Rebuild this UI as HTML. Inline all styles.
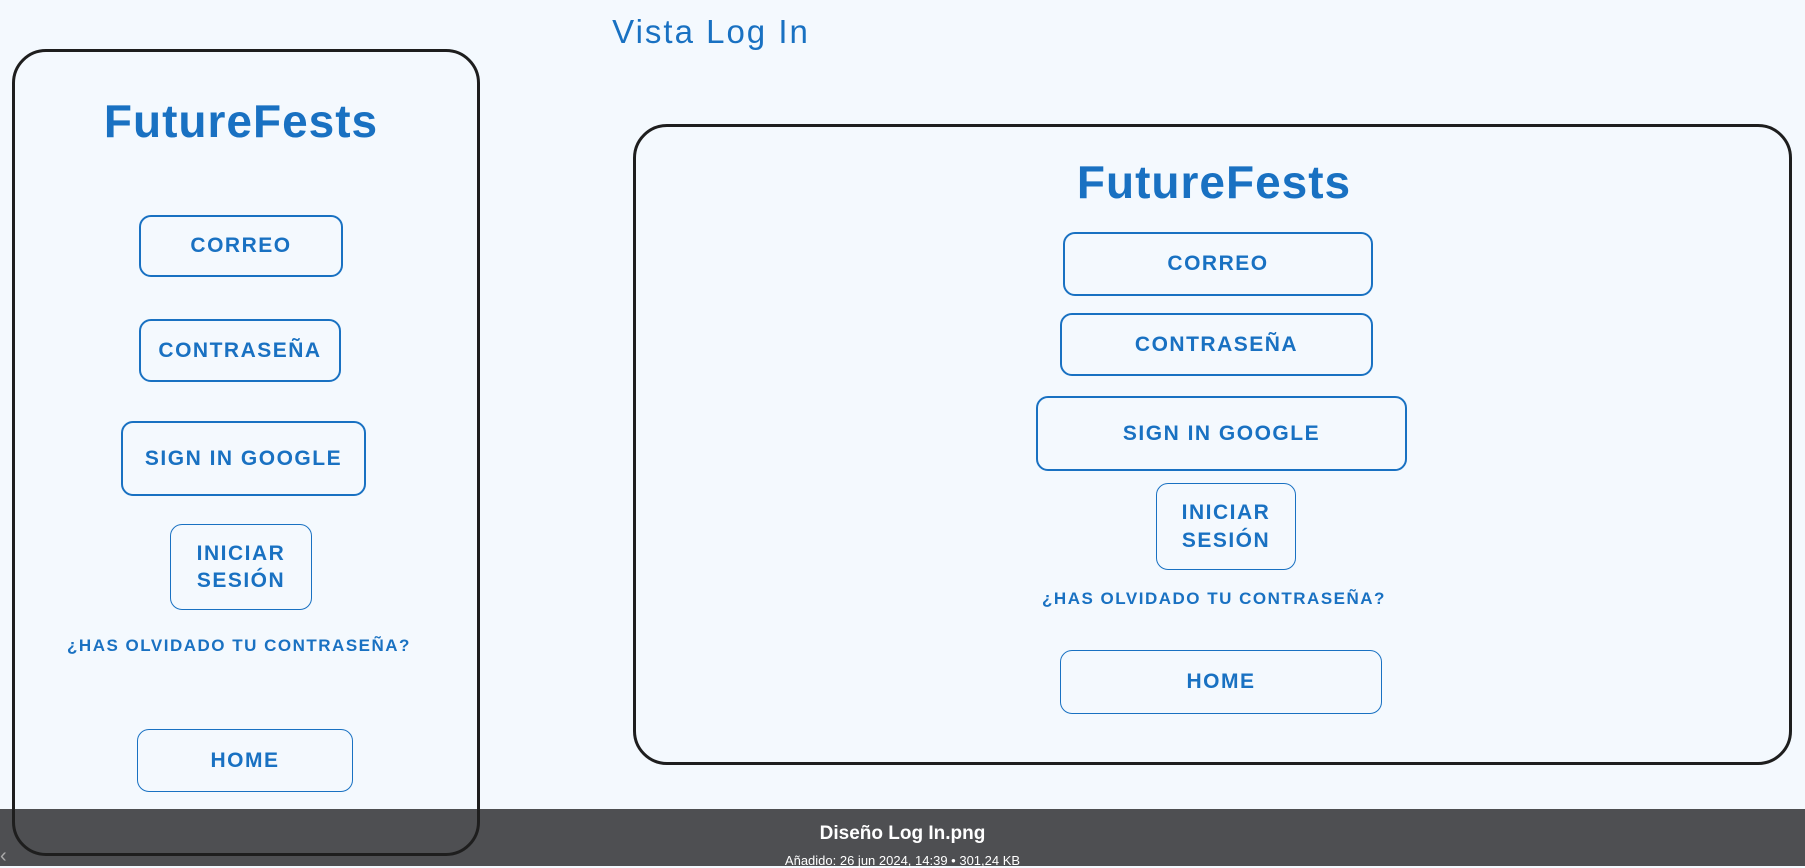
<!DOCTYPE html>
<html><head><meta charset="utf-8"><style>
*{margin:0;padding:0;box-sizing:border-box}
body{width:1805px;height:866px;background:#f4f9fe;position:relative;overflow:hidden;font-family:"Liberation Sans",sans-serif;color:#1971c2}
.a{position:absolute}
.frame{position:absolute;border:3px solid #1e1e1e;border-radius:34px}
.btn{position:absolute;border:2.5px solid #1971c2;border-radius:12px;display:flex;align-items:center;justify-content:center;text-align:center;font-size:21px;letter-spacing:1.5px;line-height:1.3;font-weight:bold}
.thin{border-width:1.5px}
.t{position:absolute;transform:translate(-50%,-50%);white-space:nowrap}
.logo{font-size:46px;letter-spacing:1px;font-weight:bold}
.forgot{font-size:17px;letter-spacing:1.5px;font-weight:bold}
.bar{position:absolute;left:0;top:809px;width:1805px;height:57px;background:rgba(72,73,76,0.97);color:#fff;text-align:center}
</style></head><body>
<div class="t" style="left:711px;top:32px;font-size:33px;letter-spacing:2px">Vista Log In</div>

<div class="t logo" style="left:241px;top:121px">FutureFests</div>
<div class="btn" style="left:139px;top:215px;width:204px;height:62px">CORREO</div>
<div class="btn" style="left:139px;top:319px;width:202px;height:63px">CONTRASEÑA</div>
<div class="btn" style="left:121px;top:421px;width:245px;height:75px">SIGN IN GOOGLE</div>
<div class="btn thin" style="left:170px;top:524px;width:142px;height:86px">INICIAR<br>SESIÓN</div>
<div class="t forgot" style="left:239px;top:646px">¿HAS OLVIDADO TU CONTRASEÑA?</div>
<div class="btn thin" style="left:137px;top:729px;width:216px;height:63px">HOME</div>

<div class="frame" style="left:633px;top:124px;width:1159px;height:641px"></div>
<div class="t logo" style="left:1214px;top:182px">FutureFests</div>
<div class="btn" style="left:1063px;top:232px;width:310px;height:64px">CORREO</div>
<div class="btn" style="left:1060px;top:313px;width:313px;height:63px">CONTRASEÑA</div>
<div class="btn" style="left:1036px;top:396px;width:371px;height:75px">SIGN IN GOOGLE</div>
<div class="btn thin" style="left:1156px;top:483px;width:140px;height:87px">INICIAR<br>SESIÓN</div>
<div class="t forgot" style="left:1214px;top:599px">¿HAS OLVIDADO TU CONTRASEÑA?</div>
<div class="btn thin" style="left:1060px;top:650px;width:322px;height:64px">HOME</div>

<div class="bar">
<div style="font-size:19px;font-weight:bold;margin-top:14px">Diseño Log In.png</div>
<div style="font-size:13px;margin-top:8px">Añadido: 26 jun 2024, 14:39 • 301,24 KB</div>
</div>
<div class="frame" style="left:12px;top:49px;width:468px;height:807px"></div>
<div class="a" style="left:0;top:845px;color:#aaa;font-size:20px">‹</div>
</body></html>
